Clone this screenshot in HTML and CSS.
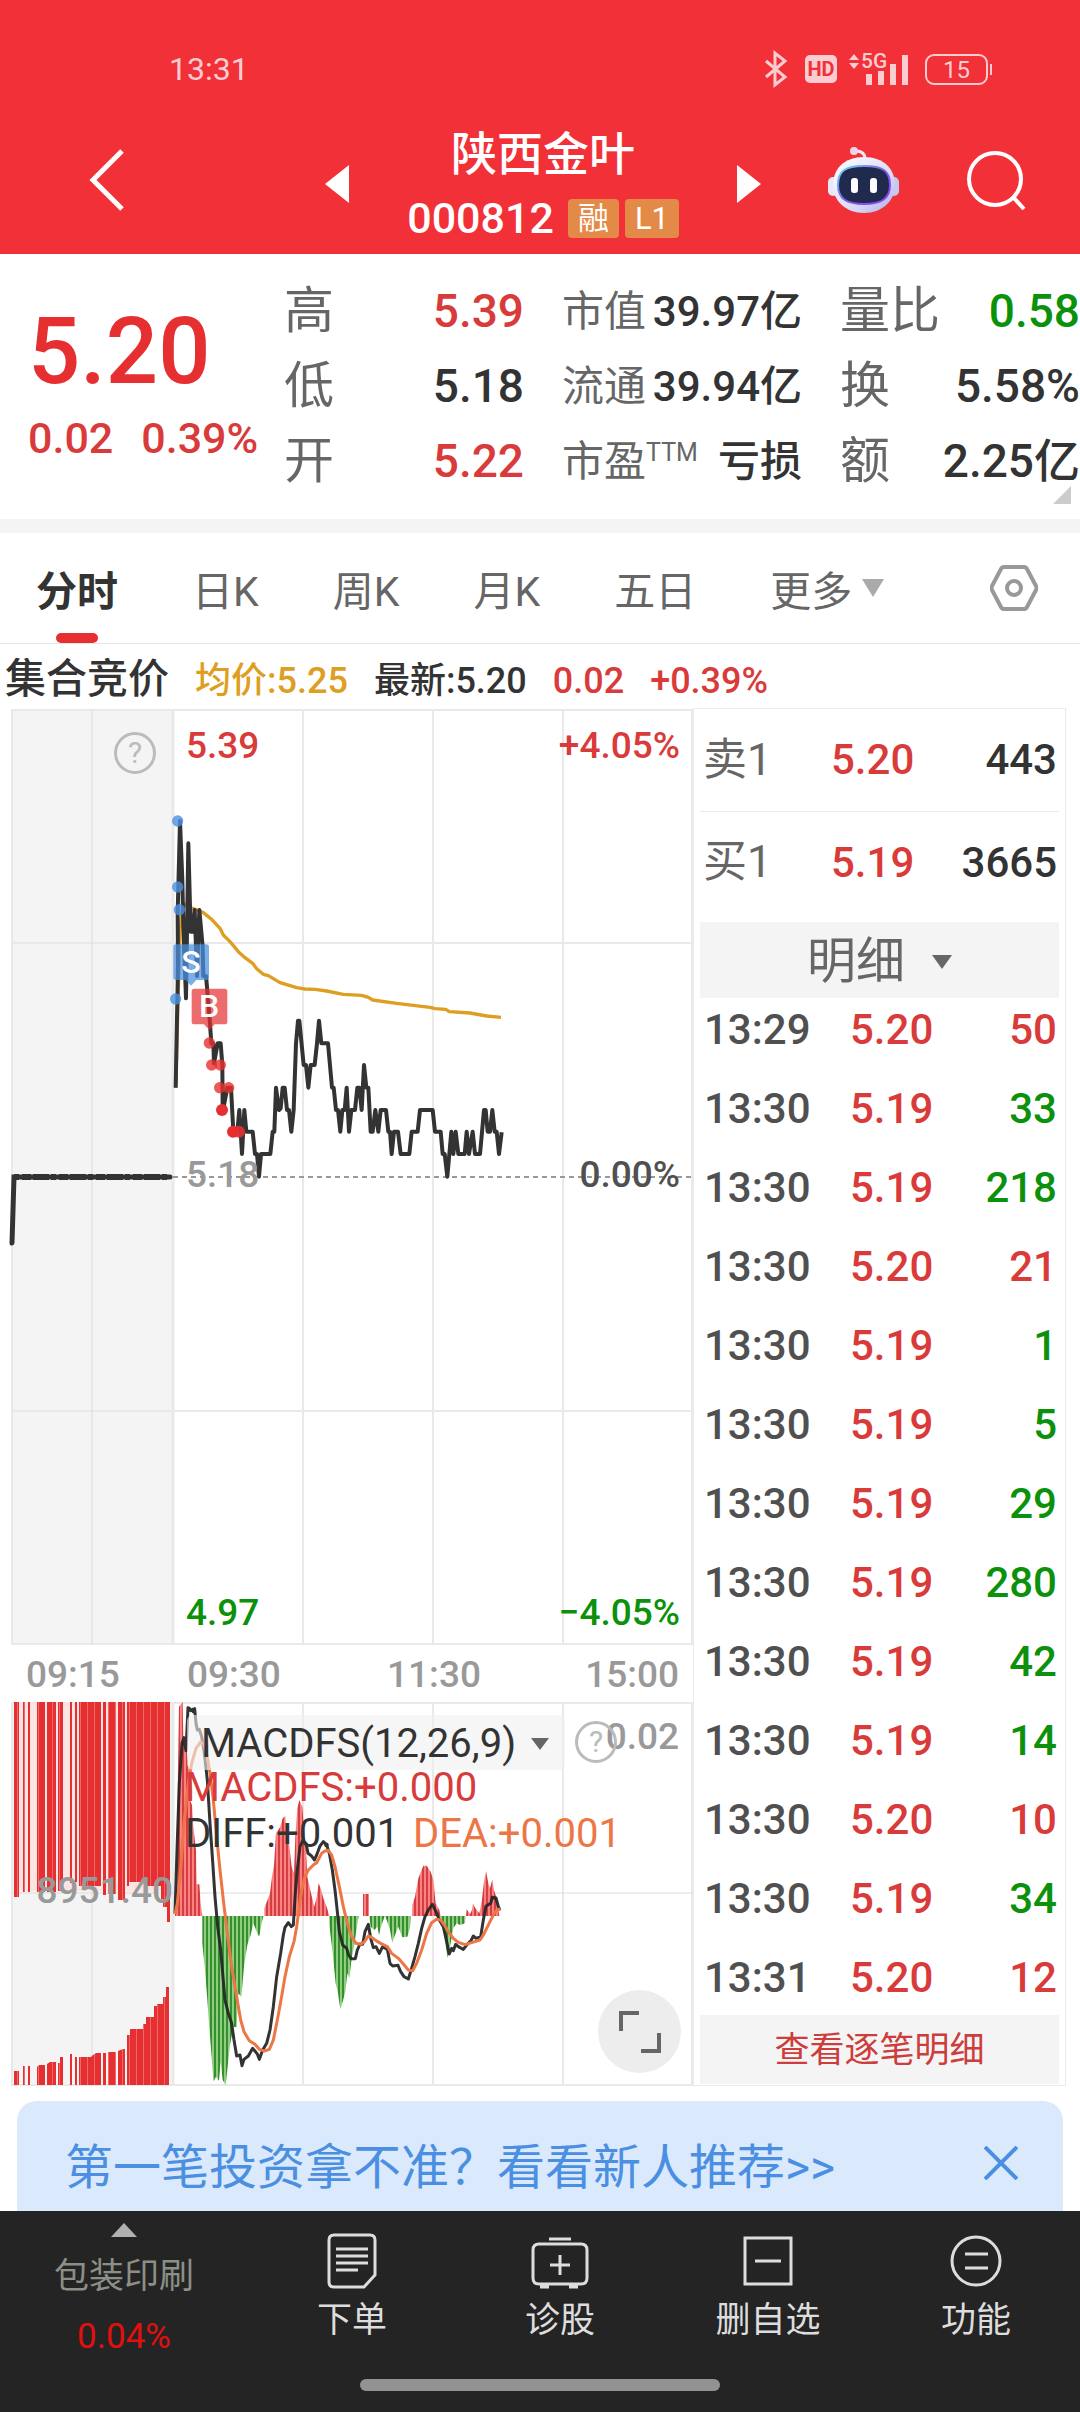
FILE: index.html
```html
<!DOCTYPE html>
<html lang="zh-CN">
<head>
    <meta charset="UTF-8">
    <meta name="viewport" content="width=device-width, initial-scale=1.0">
    <title>陕西金叶 000812</title>
    <link rel="stylesheet" href="styles.css">
</head>
<body>
    <header class="header">
        <div class="status-bar">
            <span class="clock">13:31</span>
            <svg class="status-icon" width="22" height="34" viewBox="0 0 22 34" fill="none" stroke="#fccdd0" stroke-width="3"><path d="M1 9l19 16-10 8V1l10 8L1 25"/></svg>
            <span class="hd">HD</span>
            <svg class="status-icon" width="60" height="42" viewBox="0 -8 60 42" fill="#fccdd0">
                <path d="M0 8l5-6 5 6zM0 11l5 6 5-6z"/>
                <text x="12" y="16" font-size="21" font-weight="500">5G</text>
                <path d="M17 22h6v11h-6zM29 19h6v14h-6zM41 12h6v21h-6zM53 3h6v30h-6z"/>
            </svg>
            <span class="battery">15</span>
        </div>
        <div class="title-bar">
            <button class="icon-btn" aria-label="返回">
                <svg width="36" height="62" viewBox="0 0 36 62" fill="none" stroke="#fff" stroke-width="5"><path d="M33 2L4 31l29 29"/></svg>
            </button>
            <div class="pager">
                <button class="icon-btn" aria-label="上一只">
                    <svg width="24" height="38" viewBox="0 0 24 38" fill="#fff"><path d="M24 0v38L0 19z"/></svg>
                </button>
                <div class="stock">
                    <h1>陕西金叶</h1>
                    <p class="stock-code">000812<span class="tag">融</span><span class="tag">L1</span></p>
                </div>
                <button class="icon-btn" aria-label="下一只">
                    <svg width="24" height="38" viewBox="0 0 24 38" fill="#fff"><path d="M0 0v38l24-19z"/></svg>
                </button>
            </div>
            <button class="icon-btn" aria-label="智能助手">
                <svg width="73" height="68" viewBox="0 0 73 68">
                    <defs>
                        <linearGradient id="shell" x1="0" y1="0" x2="1" y2="1"><stop offset="0" stop-color="#fff"/><stop offset=".6" stop-color="#dcdcf8"/><stop offset="1" stop-color="#aeb0ec"/></linearGradient>
                        <linearGradient id="rim" x1="0" y1="0" x2="1" y2="1"><stop offset="0" stop-color="#6fd8f5"/><stop offset=".5" stop-color="#7a5bea"/><stop offset="1" stop-color="#8a3ff0"/></linearGradient>
                    </defs>
                    <path d="M38 13c0-6-4-8-9-8" fill="none" stroke="#f4e8f4" stroke-width="3"/>
                    <circle cx="27" cy="5" r="4" fill="#ead6e8"/>
                    <rect x="1" y="31" width="10" height="19" rx="5" fill="#e8e8fb"/>
                    <rect x="62" y="31" width="10" height="19" rx="5" fill="#c6c8f4"/>
                    <path d="M37 11c20 0 31 12 31 28S55 67 37 67 6 55 6 39s11-28 31-28z" fill="url(#shell)"/>
                    <path d="M37 20c19 0 26 5 26 19s-9 19-26 19-26-5-26-19 7-19 26-19z" fill="#1f2a4d" stroke="url(#rim)" stroke-width="2"/>
                    <rect x="24" y="32" width="7" height="15" rx="3" fill="#fff"/>
                    <rect x="43" y="32" width="7" height="15" rx="3" fill="#fff"/>
                </svg>
            </button>
            <button class="icon-btn" aria-label="搜索">
                <svg width="60" height="60" viewBox="0 0 60 60" fill="none" stroke="#fff" stroke-width="4"><circle cx="29" cy="29" r="26"/><path d="M47 47l11 12"/></svg>
            </button>
        </div>
    </header>

    <main>
        <section class="quote">
            <div class="quote-price">
                <strong>5.20</strong>
                <p><span>0.02</span><span>0.39%</span></p>
            </div>
            <dl class="quote-grid">
                <div><dt>高</dt><dd class="up">5.39</dd></div>
                <div class="compact"><dt>市值</dt><dd>39.97亿</dd></div>
                <div><dt>量比</dt><dd class="down">0.58</dd></div>
                <div><dt>低</dt><dd>5.18</dd></div>
                <div class="compact"><dt>流通</dt><dd>39.94亿</dd></div>
                <div><dt>换</dt><dd>5.58%</dd></div>
                <div><dt>开</dt><dd class="up">5.22</dd></div>
                <div class="compact"><dt>市盈<sup>TTM</sup></dt><dd>亏损</dd></div>
                <div><dt>额</dt><dd>2.25亿</dd></div>
            </dl>
        </section>

        <nav class="tabs">
            <button class="tab active">分时</button>
            <button class="tab">日K</button>
            <button class="tab">周K</button>
            <button class="tab">月K</button>
            <button class="tab">五日</button>
            <button class="tab">更多<svg width="22" height="18" viewBox="0 0 22 18" fill="#aaa"><path d="M0 0h22L11 18z"/></svg></button>
            <button class="tab settings" aria-label="图表设置">
                <svg width="48" height="46" viewBox="0 0 48 46" fill="none" stroke="#999" stroke-width="4" stroke-linejoin="round"><path d="M14 2h20q2 0 3 2l9 17q1 2 0 4l-9 17q-1 2-3 2H14q-2 0-3-2L2 25q-1-2 0-4l9-17q1-2 3-2z"/><circle cx="24" cy="23" r="7"/></svg>
            </button>
        </nav>

        <div class="summary">
            <span class="auction">集合竞价</span>
            <span class="avg">均价:5.25</span>
            <span>最新:5.20</span>
            <span class="up">0.02</span>
            <span class="up">+0.39%</span>
        </div>

        <div class="board">
            <div class="charts">
                <div class="chart">
                    <svg class="plot" viewBox="0 0 693 994">
                        <rect x="12" y="1" width="160" height="935" fill="#f4f4f4"/>
                        <g stroke="#e9e9e9" stroke-width="2" fill="none">
                            <path d="M12 2h681M12 235h681M12 703h681M12 936h681"/>
                            <path d="M12 1v936M303 1v936M433 1v936M563 1v936M692 1v936"/>
                            <path d="M92 1v936" stroke="#dcdcdc" stroke-width="1"/>
                            <path d="M173 1v936" stroke-width="3"/>
                        </g>
                        <path d="M173 469h520" stroke="#999" stroke-width="2" stroke-dasharray="5 4"/>
                        <path d="M12 535l2-66h156" fill="none" stroke="#333" stroke-width="5" stroke-linecap="round"/>
                        <path d="M14 469h156" stroke="#333" stroke-width="6" stroke-dasharray="5 3 9 2 16 2"/>
                        <!-- 均价线与分时线 -->
                        <svg x="150" y="72" width="360" height="420" viewBox="0 0 1080 1260" fill="none" stroke-linejoin="round">
                            <path stroke="#dd9e22" stroke-width="10" d="M77 923L90 450 100 370 125 384 160 398 185 418 210 445 220 465 240 485 265 515 285 533 308 550 320 566 340 583 355 587 390 608 440 623 465 627 495 628 530 633 580 643 635 646 655 652 668 660 740 670 840 682 855 686 887 688 898 695 960 699 1010 708 1053 712"/>
                            <path stroke="#333" stroke-width="12" d="M77 923L84 560 83 400 90 123 97 300 100 440 108 655 115 190 122 455 128 455 134 390 141 588 148 390 158 500 160 588 168 588 177 690 184 790 190 790 192 850 203 790 212 790 217 855 218 990 222 975 232 923 243 923 250 1055 262 1055 268 990 276 1122 283 990 289 1055 308 1055 315 1122 321 1122 327 1190 333 1122 361 1122 368 1055 373 1055 378 923 387 990 392 985 398 923 404 923 411 990 417 990 424 1055 431 990 438 790 444 722 448 722 461 855 468 855 475 923 482 855 494 855 501 790 507 722 514 790 534 790 546 923 551 923 558 990 564 990 571 1055 577 990 584 990 590 923 597 1055 604 990 615 990 622 923 628 923 635 990 642 855 649 923 655 923 662 1055 668 1055 676 990 685 1055 692 990 708 990 715 1055 720 1055 725 1122 732 1055 744 1055 752 1122 778 1122 785 1055 803 1055 810 990 848 990 855 1055 872 1055 878 1122 884 1122 892 1190 904 1055 910 1122 917 1055 925 1122 944 1122 950 1055 957 1122 968 1055 975 1122 990 1122 1002 990 1007 990 1013 1055 1020 1055 1027 990 1034 1055 1040 1055 1047 1122 1055 1057"/>
                            <g fill="#4a90e2" fill-opacity=".8">
                                <circle cx="83" cy="123" r="17"/><circle cx="83" cy="321" r="17"/><circle cx="88" cy="389" r="17"/><circle cx="77" cy="657" r="17"/>
                                <path fill-opacity=".72" d="M78 493h91q8 0 8 8v91q0 8-8 8h-30l-16 17-16-17H78q-8 0-8-8v-91q0-8 8-8z"/>
                            </g>
                            <g fill="#e62f30" fill-opacity=".8">
                                <path fill-opacity=".7" d="M133 626h91q8 0 8 8v91q0 8-8 8h-30l-16 17-16-17h-29q-8 0-8-8v-91q0-8 8-8z"/>
                                <circle cx="178" cy="789" r="17"/><circle cx="185" cy="855" r="17"/><circle cx="211" cy="855" r="17"/><circle cx="209" cy="923" r="17"/><circle cx="236" cy="923" r="17"/>
                                <circle cx="216" cy="990" r="18" fill-opacity="1"/><circle cx="249" cy="1055" r="18" fill-opacity="1"/><circle cx="267" cy="1055" r="18" fill-opacity=".9"/>
                            </g>
                        </svg>
                        <text class="mark" x="191" y="265">S</text>
                        <text class="mark" x="209" y="309">B</text>
                        <g class="axis">
                            <text class="up" x="186" y="50">5.39</text>
                            <text class="up end" x="680" y="50">+4.05%</text>
                            <text x="186" y="479">5.18</text>
                            <text class="dark end" x="680" y="479">0.00%</text>
                            <text class="down" x="186" y="917">4.97</text>
                            <text class="down end" x="680" y="917">−4.05%</text>
                            <text x="26" y="979">09:15</text>
                            <text x="187" y="979">09:30</text>
                            <text class="middle" x="434" y="979">11:30</text>
                            <text class="end" x="679" y="979">15:00</text>
                        </g>
                    </svg>
                    <button class="help auction-help" aria-label="集合竞价说明">?</button>
                </div>

                <div class="chart">
                    <svg class="plot" viewBox="0 0 693 384">
                        <defs>
                            <pattern id="auctionBars" width="7" height="8" patternUnits="userSpaceOnUse"><rect width="7" height="8" fill="#e62f30"/><rect x="3" width="1" height="8" fill="#f0696a"/></pattern>
                            <pattern id="redBars" width="12" height="8" patternUnits="userSpaceOnUse"><rect width="12" height="8" fill="#ff8080"/><rect width="6" height="8" fill="#d23f42"/></pattern>
                            <pattern id="greenBars" width="12" height="8" patternUnits="userSpaceOnUse"><rect width="12" height="8" fill="#8fce80"/><rect width="6" height="8" fill="#348f2c"/></pattern>
                        </defs>
                        <rect x="12" y="0" width="160" height="383" fill="#f4f4f4"/>
                        <g stroke="#e9e9e9" stroke-width="2" fill="none">
                            <path d="M12 1h681M12 383h681M303 0v384M433 0v384M563 0v384M692 0v384M12 0v384"/>
                            <path d="M173 0v384" stroke-width="3"/>
                            <path d="M12 191h681M92 0v384" stroke="#dcdcdc" stroke-width="1"/>
                        </g>
                        <!-- 集合竞价量 -->
                        <path fill="#fbe4e2" d="M14 0h156v189H14z"/>
                        <path fill="url(#auctionBars)" d="M14 0h5v195h-5zM23 0h2v190h-2zM28 0h2v190h-2zM37 0h8v190h-8zM47 0h9v190h-9zM58 0h5v189h-5zM70 0h2v181h-2zM75 0h2v180h-2zM79 0h22v184H79zM103 0h3v193h-3zM108 0h8v192h-8zM118 0h7v198h-7zM127 0h43v220h-3v-15h-4v-8h-2v-13h-14v-4h-18v4h-2z"/>
                        <path fill="url(#auctionBars)" d="M14 383v-14h5v14zM23 383v-19h2v19zM28 383v-19h2v19zM37 383v-18l2-2h6v20zM47 383v-21l3-2h6v23zM58 383v-22h2v-6h3v28zM70 383v-31h2v31zM75 383v-28h2v28zM79 383v-28h12l2-2 3-2h5v32zM103 383v-32h3v32zM108 383v-33h8v33zM118 383v-34l5-2h2v36zM127 383v-50h3v-6h13v-5h3v-7h8v-11h3v-2h6v-7h3v-10h3v98z"/>
                        <!-- MACD柱与DIFF、DEA线 -->
                        <svg x="170" y="-12" width="340" height="400" viewBox="0 0 1020 1200" fill="none" stroke-linejoin="round">
                            <path fill="url(#redBars)" d="M15 678L20 480 27 50 38 36 40 150 50 180 58 250 60 330 66 345 70 410 78 480 80 583 88 583 92 640 97 678zM283 678V655L300 610 306 560 312 525 318 430 330 412 338 385 346 378 350 440 356 450 365 530 372 550 376 440 382 355 388 330 397 350 402 420 408 480 412 560 422 605 433 650 440 620 446 580 452 595 460 625 470 650 478 678zM579 678V612H597V678zM726 678L727 645 735 620 745 565 760 527 770 527 782 545 790 570 797 640 808 660 812 678zM888 678L890 658 900 672 906 660 909 640 916 655 928 670 935 635 942 575 948 543 955 580 960 595 967 568 972 600 980 625 988 678z"/>
                            <path fill="url(#greenBars)" d="M97 678V760L105 840 112 930 118 1015 125 1100 130 1175 138 1160 147 1172 152 1115 158 1170 167 1185 173 1130 180 1065 190 1010 200 1012 205 910 214 920 222 830 232 765 242 735 250 700 255 712 264 735 268 738 275 700 280 678zM477 678L478 705 487 780 497 880 504 910 511 958 518 935 526 905 532 850 538 865 545 805 552 770 560 715 566 678zM598 678L602 710 613 720 622 710 627 735 633 710 640 690 645 678 652 695 660 720 667 758 675 735 685 710 697 742 712 740 720 715 722 678zM808 678L820 700 826 760 833 803 840 770 850 715 860 700 870 705 885 700 887 678z"/>
                            <path stroke="#262626" stroke-opacity=".94" stroke-width="9" d="M15 670L22 450 28 280 36 160 42 143 48 182 54 53 58 55 62 62 68 58 70 66 74 56 78 100 82 120 88 118 95 140 103 190 112 270 120 400 127 500 135 620 143 710 152 780 158 850 165 930 175 970 185 1000 192 1050 200 1098 210 1095 216 1127 222 1108 235 1098 248 1075 262 1092 268 1108 278 1080 290 1060 300 1020 310 950 320 860 332 790 340 735 345 712 355 698 364 710 370 705 376 610 382 540 390 470 398 452 408 460 414 490 424 497 433 510 440 495 450 468 460 455 470 465 478 490 487 540 495 600 502 665 508 725 518 765 530 775 536 795 543 806 556 806 562 780 570 762 578 763 585 725 595 703 602 745 610 773 618 770 628 790 638 770 652 778 660 820 668 828 684 826 692 845 702 860 715 867 722 845 735 800 745 760 755 715 765 680 775 660 787 643 798 665 808 690 820 710 830 755 838 792 845 775 850 782 857 763 865 770 880 778 890 765 903 752 910 738 918 745 932 740 940 690 948 648 962 640 967 622 978 624 985 650 990 660"/>
                            <path stroke="#ec7646" stroke-width="9" d="M15 672L22 640 32 540 42 400 55 280 65 220 78 175 92 156 102 162 110 190 120 250 130 330 140 440 150 540 160 630 172 730 185 830 200 920 212 990 222 1025 238 1052 255 1063 268 1078 283 1083 298 1078 310 1050 322 990 333 930 345 860 358 800 372 755 380 710 388 650 395 600 405 560 415 540 430 525 440 518 455 490 465 483 475 481 485 495 495 530 508 590 520 650 532 700 545 740 558 760 572 763 582 757 595 738 605 742 618 752 632 760 652 770 665 790 685 805 700 822 715 840 728 842 740 820 755 780 770 730 785 698 800 688 812 690 823 705 835 725 850 745 865 757 885 764 905 758 930 750 940 735 950 715 960 695 970 675 980 660 992 657"/>
                        </svg>
                        <g class="axis">
                            <text class="end" x="679" y="47">0.02</text>
                            <text class="end" x="173" y="201">8951.40</text>
                        </g>
                        <g class="legend">
                            <text class="up" x="185" y="99">MACDFS:+0.000</text>
                            <text class="ink" x="185" y="145">DIFF:+0.001</text>
                            <text class="dea" x="413" y="145">DEA:+0.001</text>
                        </g>
                    </svg>
                    <div class="indicator">
                        <select aria-label="指标">
                            <option>MACDFS(12,26,9)</option>
                        </select>
                        <svg width="18" height="12" viewBox="0 0 18 12" fill="#666"><path d="M0 0h18L9 12z"/></svg>
                    </div>
                    <button class="help indicator-help" aria-label="指标说明">?</button>
                    <button class="expand" aria-label="全屏">
                        <svg width="44" height="44" viewBox="0 0 44 44" fill="none" stroke="#666" stroke-width="4"><path d="M3 21V3h18M41 23v18H23"/></svg>
                    </button>
                </div>
            </div>

            <aside class="side">
                <table class="depth">
                    <tr><th scope="row">卖1</th><td class="up">5.20</td><td>443</td></tr>
                    <tr><th scope="row">买1</th><td class="up">5.19</td><td>3665</td></tr>
                </table>
                <div class="detail-switch">
                    <select aria-label="列表类型">
                        <option>明细</option>
                    </select>
                    <svg width="20" height="14" viewBox="0 0 20 14" fill="#666"><path d="M0 0h20L10 14z"/></svg>
                </div>
                <table class="ticks">
                    <tr><td>13:29</td><td>5.20</td><td class="up">50</td></tr>
                    <tr><td>13:30</td><td>5.19</td><td class="down">33</td></tr>
                    <tr><td>13:30</td><td>5.19</td><td class="down">218</td></tr>
                    <tr><td>13:30</td><td>5.20</td><td class="up">21</td></tr>
                    <tr><td>13:30</td><td>5.19</td><td class="down">1</td></tr>
                    <tr><td>13:30</td><td>5.19</td><td class="down">5</td></tr>
                    <tr><td>13:30</td><td>5.19</td><td class="down">29</td></tr>
                    <tr><td>13:30</td><td>5.19</td><td class="down">280</td></tr>
                    <tr><td>13:30</td><td>5.19</td><td class="down">42</td></tr>
                    <tr><td>13:30</td><td>5.19</td><td class="down">14</td></tr>
                    <tr><td>13:30</td><td>5.20</td><td class="up">10</td></tr>
                    <tr><td>13:30</td><td>5.19</td><td class="down">34</td></tr>
                    <tr><td>13:31</td><td>5.20</td><td class="up">12</td></tr>
                </table>
                <a class="all-ticks" href="#">查看逐笔明细</a>
            </aside>
        </div>

        <div class="banner">
            <a href="#">第一笔投资拿不准？看看新人推荐&gt;&gt;</a>
            <button class="icon-btn" aria-label="关闭">
                <svg width="34" height="34" viewBox="0 0 34 34" fill="none" stroke="#4a8fe2" stroke-width="4"><path d="M1 1l32 32M33 1L1 33"/></svg>
            </button>
        </div>
    </main>

    <footer class="bottom">
        <nav class="actions">
            <a class="sector" href="#">
                <svg width="26" height="14" viewBox="0 0 26 14" fill="#b0b0b0"><path d="M13 0l13 14H0z"/></svg>
                <span>包装印刷</span>
                <span class="sector-change">0.04%</span>
            </a>
            <a href="#">
                <svg width="50" height="56" viewBox="0 0 50 56" fill="none" stroke="#ddd" stroke-width="3"><path d="M7 2h36q5 0 5 5v35L37 54H7q-5 0-5-5V7q0-5 5-5zM9 16h32M9 23h32M9 30h32M9 37h22"/></svg>
                <span>下单</span>
            </a>
            <a href="#">
                <svg width="58" height="56" viewBox="0 0 58 56" fill="none" stroke="#ddd" stroke-width="3"><path d="M18 6h22M8 11h42q6 0 6 6v28q0 6-6 6H8q-6 0-6-6V17q0-6 6-6zM29 22v20M19 32h20M9 54h9M38 54h9"/></svg>
                <span>诊股</span>
            </a>
            <a href="#">
                <svg width="50" height="56" viewBox="0 0 50 56" fill="none" stroke="#ddd" stroke-width="3"><path d="M2 5h46v46H2zM12 28h26"/></svg>
                <span>删自选</span>
            </a>
            <a href="#">
                <svg width="52" height="56" viewBox="0 0 52 56" fill="none" stroke="#ddd" stroke-width="3"><circle cx="26" cy="28" r="24"/><path d="M15 21h23M15 35h23"/></svg>
                <span>功能</span>
            </a>
        </nav>
        <div class="home-bar"></div>
    </footer>
</body>
</html>
```
FILE: styles.css
```css
* {
    box-sizing: border-box;
}

body {
    margin: 0;
    background-color: #fff;
    color: #333;
    font-family: Roboto, "Noto Sans CJK SC", sans-serif;
}

h1, p, dl, dd {
    margin: 0;
}

button, select {
    padding: 0;
    border: none;
    background: none;
    color: inherit;
    font-family: inherit;
}

a {
    color: inherit;
    text-decoration: none;
}

svg {
    display: block;
    flex-shrink: 0;
}

table {
    width: 100%;
    border-collapse: collapse;
}

th, td {
    padding: 0;
}

.up {
    color: #d93a3a;
    fill: #d93a3a;
}

.down {
    color: #0b910b;
    fill: #0b910b;
}

.icon-btn {
    display: flex;
}

/* 顶部 */
.header {
    background-color: #f23038;
    color: #fff;
    height: 254px;
}

.status-bar {
    display: flex;
    align-items: center;
    height: 120px;
    padding: 18px 92px 0 169px;
    color: #fccdd0;
}

.status-icon {
    overflow: visible;
}

.clock {
    margin-right: auto;
    font-size: 32px;
}

.hd {
    margin: 0 12px 0 18px;
    width: 32px;
    height: 28px;
    border-radius: 5px;
    background-color: #fccdd0;
    color: #f23038;
    font-size: 20px;
    font-weight: 700;
    line-height: 28px;
    text-align: center;
}

.hd + .status-icon {
    margin-bottom: 8px;
}

.battery {
    position: relative;
    margin-left: 16px;
    width: 63px;
    height: 31px;
    border: 2px solid #fccdd0;
    border-radius: 9px;
    font-size: 24px;
    line-height: 28px;
    text-align: center;
}

.battery::after {
    content: "";
    position: absolute;
    top: 8px;
    right: -6px;
    width: 2px;
    height: 11px;
    background-color: #fccdd0;
}

.title-bar {
    display: flex;
    align-items: center;
    gap: 66px;
    height: 132px;
    padding: 0 54px 0 89px;
}

.title-bar .icon-btn {
    margin-bottom: 12px;
}

.title-bar .pager .icon-btn {
    margin-bottom: 4px;
}

.pager {
    display: flex;
    align-items: center;
    gap: 58px;
    margin-left: auto;
}

.stock h1 {
    font-size: 46px;
    font-weight: 500;
    line-height: 64px;
    text-align: center;
}

.stock-code {
    display: flex;
    align-items: center;
    font-size: 43px;
    font-weight: 500;
    line-height: 64px;
}

.tag {
    margin-left: 6px;
    padding: 0 10px;
    border-radius: 4px;
    background-color: #e48a48;
    font-size: 31px;
    font-weight: 400;
    line-height: 39px;
}

.tag:first-child {
    margin-left: 14px;
}

/* 行情数据 */
.quote {
    position: relative;
    display: flex;
    padding: 20px 0;
    border-bottom: 14px solid #f4f4f4;
}

.quote::after {
    content: "";
    position: absolute;
    right: 9px;
    bottom: 15px;
    border-left: 18px solid transparent;
    border-bottom: 18px solid #ccc;
}

.quote-price {
    width: 284px;
    padding: 22px 0 0 28px;
    color: #e62f30;
}

.quote-price strong {
    display: block;
    font-size: 92px;
    font-weight: 500;
    line-height: 112px;
}

.quote-price p {
    display: flex;
    gap: 28px;
    color: #d93a3a;
    font-size: 43px;
    line-height: 60px;
    font-weight: 500;
}

.quote-grid {
    flex: 1;
    display: grid;
    grid-template-columns: repeat(3, 1fr);
    column-gap: 38px;
}

.quote-grid div {
    display: flex;
    justify-content: space-between;
    align-items: center;
    height: 75px;
    font-size: 46px;
    line-height: 75px;
    white-space: nowrap;
}

.quote-grid dt {
    color: #666;
    font-size: 50px;
}

.quote-grid dd {
    font-weight: 500;
}

.quote-grid .compact,
.quote-grid .compact dt {
    font-size: 42px;
}

.quote-grid sup {
    font-size: 25px;
    line-height: 25px;
}

/* 周期切换 */
.tabs {
    display: flex;
    align-items: stretch;
    gap: 74px;
    height: 111px;
    padding: 0 42px 0 36px;
    border-bottom: 1px solid #e6e6e6;
}

.tab {
    position: relative;
    display: flex;
    align-items: center;
    gap: 10px;
    color: #666;
    font-size: 41px;
}

.tab.active {
    color: #333;
    font-weight: 700;
}

.tab.active::after {
    content: "";
    position: absolute;
    left: 50%;
    bottom: 0;
    width: 42px;
    height: 10px;
    margin-left: -21px;
    border-radius: 5px;
    background-color: #e62f30;
}

.settings {
    margin-left: auto;
}

.summary {
    display: flex;
    align-items: baseline;
    gap: 26px;
    height: 64px;
    padding: 0 5px;
    font-size: 36px;
    font-weight: 500;
    line-height: 70px;
    white-space: nowrap;
}

.summary .auction {
    font-size: 41px;
}

.avg {
    color: #dd9e22;
}

/* 图表 */
.board {
    display: flex;
    align-items: flex-start;
}

.charts {
    flex: 1;
    min-width: 0;
}

.chart {
    position: relative;
}

.plot {
    width: 100%;
    height: auto;
    overflow: hidden;
}

.axis {
    fill: #999;
    font-size: 37px;
    font-weight: 500;
}

.end {
    text-anchor: end;
}

.middle {
    text-anchor: middle;
}

.dark {
    fill: #505050;
}

.ink {
    fill: #333;
}

.dea {
    fill: #ec7646;
}

.mark {
    fill: #fff;
    font-size: 32px;
    font-weight: 500;
    text-anchor: middle;
}

.legend {
    font-size: 40px;
}

.help {
    position: absolute;
    width: 42px;
    height: 42px;
    border: 3px solid #bbb;
    border-radius: 50%;
    color: #bbb;
    font-size: 30px;
    line-height: 36px;
}

.auction-help {
    top: 24px;
    left: 114px;
}

.indicator {
    position: absolute;
    top: 13px;
    left: 187px;
    display: flex;
    align-items: center;
    height: 55px;
    padding: 2px 16px 0 14px;
    border-radius: 6px;
    background-color: rgba(240, 240, 240, 0.6);
}

.indicator select {
    appearance: none;
    width: 330px;
    font-size: 40px;
    color: #333;
}

.indicator-help {
    top: 19px;
    left: 575px;
}

.expand {
    position: absolute;
    right: 12px;
    bottom: 13px;
    display: flex;
    align-items: center;
    justify-content: center;
    width: 83px;
    height: 83px;
    border-radius: 50%;
    background-color: #ededed;
}

/* 盘口与明细 */
.side {
    width: 373px;
    margin-right: 14px;
    padding: 0 6px 1px;
    border: 1px solid #ebebeb;
    font-size: 42px;
    font-weight: 500;
}

.depth tr {
    height: 102px;
}

.depth tr:first-child {
    border-bottom: 1px solid #ebebeb;
}

.depth th {
    width: 131px;
    padding-left: 3px;
    color: #666;
    font-size: 44px;
    font-weight: 400;
    line-height: 60px;
    text-align: left;
}

.side td:last-child {
    padding-right: 2px;
    text-align: right;
}

.detail-switch {
    display: flex;
    align-items: center;
    justify-content: center;
    gap: 26px;
    height: 76px;
    margin-top: 9px;
    padding-top: 4px;
    background-color: #f4f4f4;
    color: #666;
}

.detail-switch select {
    appearance: none;
    font-size: 49px;
    line-height: 70px;
}

.ticks {
    margin: -8px 0 -2px;
}

.ticks tr {
    height: 79px;
}

.ticks td:first-child {
    width: 150px;
    padding-left: 4px;
    color: #505050;
}

.ticks td:nth-child(2) {
    color: #d93a3a;
}

.all-ticks {
    display: block;
    height: 69px;
    padding-top: 3px;
    background-color: #f4f4f4;
    color: #cc3d3b;
    font-size: 35px;
    font-weight: 400;
    line-height: 66px;
    text-align: center;
}

.banner {
    display: flex;
    align-items: center;
    justify-content: space-between;
    height: 110px;
    margin: 15px 17px 0;
    padding: 14px 45px 0 48px;
    border-radius: 20px 20px 0 0;
    background-color: #dae9fb;
    color: #4a8fe2;
    font-size: 48px;
}

/* 底部操作栏 */
.bottom {
    height: 201px;
    background-color: #242424;
    color: #ddd;
}

.actions {
    display: flex;
    height: 168px;
    padding-top: 12px;
    font-size: 35px;
    line-height: 52px;
}

.actions a {
    flex: 1;
    display: flex;
    flex-direction: column;
    align-items: center;
    gap: 6px;
    padding-top: 10px;
}

.actions .sector {
    flex: none;
    width: 248px;
    gap: 8px;
    padding: 0;
    color: #8b8f86;
}

.actions .sector-change {
    color: #e01010;
}

.sector span:nth-child(2) {
    margin-top: 6px;
}

.home-bar {
    width: 360px;
    height: 12px;
    margin: 0 auto;
    border-radius: 6px;
    background-color: #929292;
}
```
